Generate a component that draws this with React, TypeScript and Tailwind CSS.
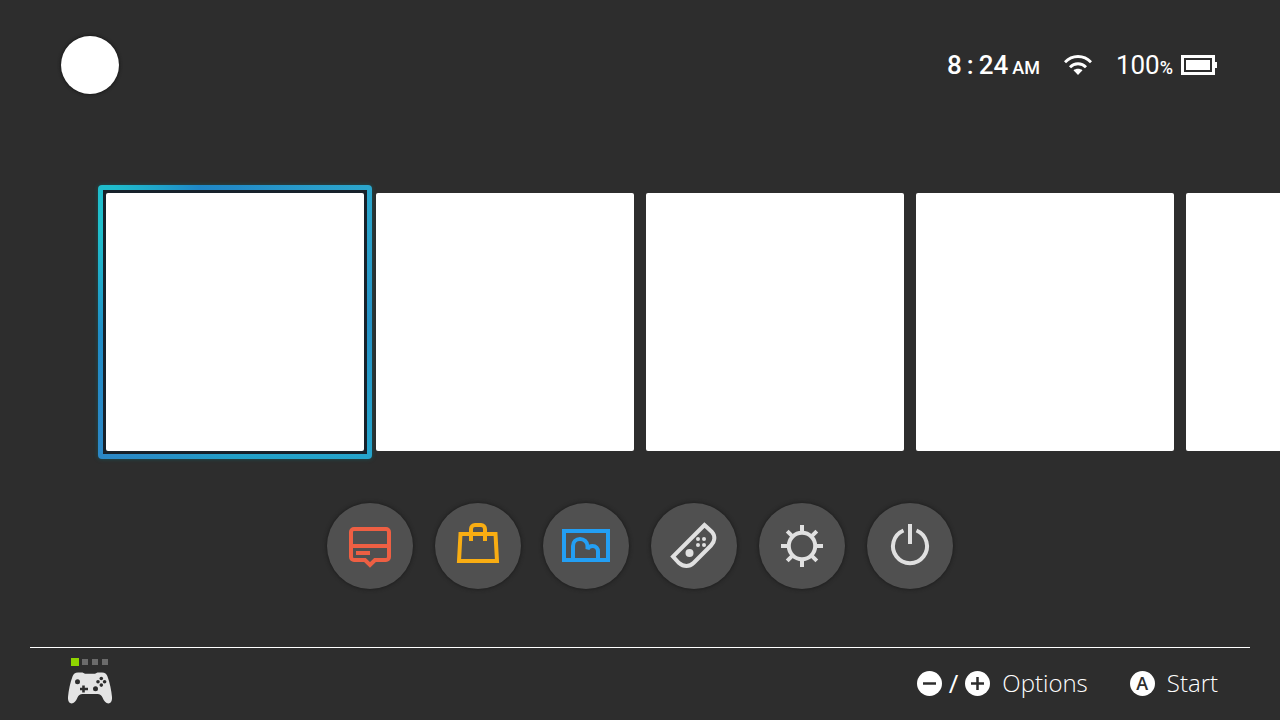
import React from 'react'

interface DockItem {
    id: string
    label: string
    color: string
    icon: React.ReactNode
}

const games = ["Game 1", "Game 2", "Game 3", "Game 4", "Game 5"]

const players = [true, false, false, false]

const dockItems: DockItem[] = [
    {
        id: "news",
        label: "News",
        color: "text-[#ee5f43]",
        icon: (
            <>
                <path d="M27 26h32a3 3 0 0 1 3 3v25a3 3 0 0 1-3 3H48l-5 5-5-5H27a3 3 0 0 1-3-3V29a3 3 0 0 1 3-3z" />
                <path d="M24 43h38M29 50h14" />
            </>
        ),
    },
    {
        id: "shop",
        label: "Shop",
        color: "text-[#f9ad12]",
        icon: (
            <>
                <path d="M25.5 31h35l1.5 27H24z" />
                <path d="M36 38V26a4 4 0 0 1 4-4h6a4 4 0 0 1 4 4v12" />
            </>
        ),
    },
    {
        id: "album",
        label: "Album",
        color: "text-[#239ff4]",
        icon: (
            <>
                <path d="M21 28h44v29H21z" />
                <path d="M30 57V43c0-4 3-7 7-7s7.5 3 7.5 7v3c1-2 3-3 5-3 3.5 0 5.5 2.5 5.5 5.5V57" />
            </>
        ),
    },
    {
        id: "controllers",
        label: "Controllers",
        color: "text-[#e0e0e0]",
        icon: (
            <>
                <path d="M53.5 22 22 53.5l6 6.5c4.5 4 10.5 4 14.5 0L60 42.5c4-4 4.5-9.5 1-13.500z" />
                <g fill="currentColor" stroke="none">
                    <circle cx="38.5" cy="50" r="4" />
                    <circle cx="47" cy="36" r="2" />
                    <circle cx="53" cy="36" r="2" />
                    <circle cx="47" cy="42" r="2" />
                    <circle cx="53" cy="42" r="2" />
                </g>
            </>
        ),
    },
    {
        id: "settings",
        label: "System Settings",
        color: "text-[#e0e0e0]",
        icon: (
            <>
                <circle cx="43" cy="43" r="13.2" />
                <path d="M43 22v7M43 57v7M22 43h7M57 43h7M28.2 28.2l5 5M52.8 52.8l5 5M57.8 28.2l-5 5M33.2 52.8l-5 5" />
            </>
        ),
    },
    {
        id: "power",
        label: "Sleep Mode",
        color: "text-[#e0e0e0]",
        icon: (
            <>
                <path d="M36.5 27.5A17 17 0 1 0 49.5 27.5" />
                <path d="M43 21v20" />
            </>
        ),
    },
]

function WifiIcon() {
    return (
        <svg width="28" height="22" viewBox="0 0 28 22" fill="none" stroke="currentColor" strokeWidth="2.8" aria-hidden="true">
            <path d="M1 8.2C8.2.6 19.8.6 27 8.2" />
            <path d="M6 13.2c4.4-4.6 11.6-4.6 16 0" />
            <path d="M14 21l-4.5-4.7c2.6-2 6.4-2 9 0z" fill="currentColor" stroke="none" />
        </svg>
    )
}

function BatteryIcon() {
    return (
        <svg width="36" height="20" viewBox="0 0 36 20" aria-hidden="true">
            <path d="M1.5 1.5h31v17h-31z" fill="none" stroke="currentColor" strokeWidth="3" />
            <path d="M5 5h24v10H5zM33 7h3v6h-3z" fill="currentColor" />
        </svg>
    )
}

function GamepadIcon() {
    return (
        <svg width="44" height="32" viewBox="0 0 44 32" aria-hidden="true">
            <path
                d="M10 .5h4.5l2.5 1.2h10L29.5.5H34c3 0 4.5 1.5 5.5 4 2.2 6 4 14 4.5 20.5.3 4-1 6.5-3.5 6.5-2.7 0-4.5-2.5-6-6-1-2.3-2.5-3.5-5-3.5h-15c-2.5 0-4 1.2-5 3.5-1.5 3.5-3.3 6-6 6C1 31.500-.3 29 0 25 .5 18.500 2.300 10.500 4.500 4.500c1-2.500 2.500-4 5.500-4z"
                fill="#e4e4e4"
            />
            <g fill="#2d2d2d">
                <circle cx="9.5" cy="9.8" r="2.5" />
                <circle cx="27.5" cy="16.8" r="2.5" />
                <path d="M14.2 13.5h2.600v2.200H20v2.600h-3.200v2.200h-2.600v-2.200H12v-2.600h2.200z" />
                <circle cx="33.3" cy="6.5" r="1.8" />
                <circle cx="33.3" cy="13.1" r="1.8" />
                <circle cx="30" cy="9.8" r="1.8" />
                <circle cx="36.6" cy="9.8" r="1.8" />
            </g>
        </svg>
    )
}

function SignIcon({ plus }: { plus?: boolean }) {
    return (
        <svg width="25" height="25" viewBox="0 0 25 25" aria-hidden="true">
            <circle cx="12.5" cy="12.5" r="12.5" fill="white" />
            <path d={plus ? "M6 12.5h13M12.5 6v13" : "M6 12.5h13"} stroke="#2d2d2d" strokeWidth="2.5" />
        </svg>
    )
}

function GameTile({ name, selected }: { name: string; selected?: boolean }) {
    if (selected) {
        return (
            <button
                aria-label={name}
                className="-m-2 shrink-0 rounded-sm p-[5px] shadow-[0_0_4px_#1a5054] bg-[conic-gradient(#228cc8_0deg,#2ba6cc_45deg,#2591c6_90deg,#25a4cc_135deg,#22a0c8_180deg,#2b87c6_225deg,#1f8ec8_265deg,#1fc0cc_305deg,#1fbccc_318deg,#1f88c8_345deg,#228cc8_360deg)]"
            >
                <span className="block bg-[#17212a] p-[3px]">
                    <span className="block size-[258px] rounded-xs bg-white" />
                </span>
            </button>
        )
    }
    return <button aria-label={name} className="size-[258px] shrink-0 rounded-xs bg-white" />
}

export default function App() {
    return (
        <div className="flex min-h-screen flex-col overflow-x-hidden bg-[#2d2d2d] font-['Open_Sans',sans-serif] text-white">
            {/* Header: profile & status */}
            <header className="flex items-center justify-between pt-9 pr-[63px] pl-[61px]">
                <button aria-label="Profile" className="size-[58px] rounded-full bg-white shadow-[0_0_3px_1px_#1c1c1c]" />
                <div className="flex items-center font-['Roboto',sans-serif]">
                    <div className="flex items-baseline text-[26px] leading-8 font-medium">
                        <span>8</span>
                        <span className="mx-[5px]">:</span>
                        <span>24</span>
                        <span className="ml-1 text-lg">AM</span>
                    </div>
                    <span className="ml-6">
                        <WifiIcon />
                    </span>
                    <div className="ml-6 flex items-baseline text-[26px] leading-8">
                        <span>100</span>
                        <span className="text-lg font-medium">%</span>
                    </div>
                    <span className="ml-2">
                        <BatteryIcon />
                    </span>
                </div>
            </header>

            <main>
                {/* Game row */}
                <div className="mt-[99px] flex gap-3 pl-[106px]">
                    {games.map((name, i) => (
                        <GameTile key={name} name={name} selected={i === 0} />
                    ))}
                </div>

                {/* Dock */}
                <nav className="mt-[52px] flex justify-center gap-[22px]">
                    {dockItems.map((item) => (
                        <button
                            key={item.id}
                            aria-label={item.label}
                            className={`size-[86px] rounded-full bg-[#505050] shadow-[0_0_4px_#191919] ${item.color}`}
                        >
                            <svg viewBox="0 0 86 86" fill="none" stroke="currentColor" strokeWidth="4" aria-hidden="true">
                                {item.icon}
                            </svg>
                        </button>
                    ))}
                </nav>
            </main>

            {/* Footer: players & button hints */}
            <footer className="mx-[30px] mt-auto flex h-[73px] items-start justify-between border-t border-white pt-2.5 pr-8 pl-[38px]">
                <div className="flex flex-col gap-1.5">
                    <div className="flex items-center gap-1 pl-[3px]">
                        {players.map((active, i) => (
                            <span key={i} className={active ? "-mr-px size-2 bg-[#8fd400]" : "size-1.5 bg-[#6b6b6b]"} />
                        ))}
                    </div>
                    <GamepadIcon />
                </div>
                <div className="flex items-center gap-[42px] pt-[9px] text-2xl leading-8 font-light">
                    <button className="flex items-center">
                        <SignIcon />
                        <span className="mx-[7px] text-[26px] font-normal">/</span>
                        <SignIcon plus />
                        <span className="ml-3">Options</span>
                    </button>
                    <button className="flex items-center gap-3">
                        <span className="flex size-[25px] items-center justify-center rounded-full bg-white text-lg leading-none font-semibold text-[#2d2d2d]">
                            A
                        </span>
                        Start
                    </button>
                </div>
            </footer>
        </div>
    )
}
